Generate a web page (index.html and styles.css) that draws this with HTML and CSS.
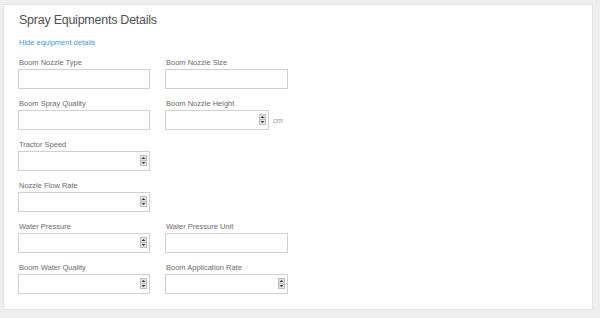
FILE: index.html
```html
<!DOCTYPE html>
<html lang="en">
<head>
  <meta charset="UTF-8" />
  <meta name="viewport" content="width=device-width, initial-scale=1.0" />
  <title>Spray Equipments Details</title>
  <link rel="stylesheet" href="styles.css">
</head>
<body>
  <div class="panel">
    <h2>Spray Equipments Details</h2>
    <a class="toggle" href="#">Hide equipment details</a>

    <div class="fields">
      <div class="field">
        <label for="nozzleType">Boom Nozzle Type</label>
        <input type="text" id="nozzleType">
      </div>
      <div class="field field-narrow">
        <label for="nozzleSize">Boom Nozzle Size</label>
        <input type="text" id="nozzleSize">
      </div>

      <div class="field">
        <label for="sprayQuality">Boom Spray Quality</label>
        <input type="text" id="sprayQuality">
      </div>
      <div class="field field-narrow">
        <label for="nozzleHeight">Boom Nozzle Height</label>
        <div class="with-unit">
          <div class="number short">
            <input type="text" id="nozzleHeight">
            <svg class="spin" width="7" height="11" viewBox="0 0 7 11"><rect x="0.5" y="0.5" width="6" height="10" fill="#e6e6e6" stroke="#bdbdbd"/><line x1="1" y1="5.5" x2="6" y2="5.5" stroke="#bdbdbd"/><path d="M3.5 2 L5.5 4 L1.5 4 Z" fill="#333"/><path d="M1.5 7 L5.5 7 L3.5 9 Z" fill="#333"/></svg>
          </div>
          <span class="unit">cm</span>
        </div>
      </div>

      <div class="field">
        <label for="tractorSpeed">Tractor Speed</label>
        <div class="number">
          <input type="text" id="tractorSpeed">
          <svg class="spin" width="7" height="11" viewBox="0 0 7 11"><rect x="0.5" y="0.5" width="6" height="10" fill="#e6e6e6" stroke="#bdbdbd"/><line x1="1" y1="5.5" x2="6" y2="5.5" stroke="#bdbdbd"/><path d="M3.5 2 L5.5 4 L1.5 4 Z" fill="#333"/><path d="M1.5 7 L5.5 7 L3.5 9 Z" fill="#333"/></svg>
        </div>
      </div>
      <div></div>

      <div class="field">
        <label for="flowRate">Nozzle Flow Rate</label>
        <div class="number">
          <input type="text" id="flowRate">
          <svg class="spin" width="7" height="11" viewBox="0 0 7 11"><rect x="0.5" y="0.5" width="6" height="10" fill="#e6e6e6" stroke="#bdbdbd"/><line x1="1" y1="5.5" x2="6" y2="5.5" stroke="#bdbdbd"/><path d="M3.5 2 L5.5 4 L1.5 4 Z" fill="#333"/><path d="M1.5 7 L5.5 7 L3.5 9 Z" fill="#333"/></svg>
        </div>
      </div>
      <div></div>

      <div class="field">
        <label for="waterPressure">Water Pressure</label>
        <div class="number">
          <input type="text" id="waterPressure">
          <svg class="spin" width="7" height="11" viewBox="0 0 7 11"><rect x="0.5" y="0.5" width="6" height="10" fill="#e6e6e6" stroke="#bdbdbd"/><line x1="1" y1="5.5" x2="6" y2="5.5" stroke="#bdbdbd"/><path d="M3.5 2 L5.5 4 L1.5 4 Z" fill="#333"/><path d="M1.5 7 L5.5 7 L3.5 9 Z" fill="#333"/></svg>
        </div>
      </div>
      <div class="field field-narrow">
        <label for="pressureUnit">Water Pressure Unit</label>
        <input type="text" id="pressureUnit">
      </div>

      <div class="field">
        <label for="waterQuality">Boom Water Quality</label>
        <div class="number">
          <input type="text" id="waterQuality">
          <svg class="spin" width="7" height="11" viewBox="0 0 7 11"><rect x="0.5" y="0.5" width="6" height="10" fill="#e6e6e6" stroke="#bdbdbd"/><line x1="1" y1="5.5" x2="6" y2="5.5" stroke="#bdbdbd"/><path d="M3.5 2 L5.5 4 L1.5 4 Z" fill="#333"/><path d="M1.5 7 L5.5 7 L3.5 9 Z" fill="#333"/></svg>
        </div>
      </div>
      <div class="field field-narrow">
        <label for="applicationRate">Boom Application Rate</label>
        <div class="number">
          <input type="text" id="applicationRate">
          <svg class="spin" width="7" height="11" viewBox="0 0 7 11"><rect x="0.5" y="0.5" width="6" height="10" fill="#e6e6e6" stroke="#bdbdbd"/><line x1="1" y1="5.5" x2="6" y2="5.5" stroke="#bdbdbd"/><path d="M3.5 2 L5.5 4 L1.5 4 Z" fill="#333"/><path d="M1.5 7 L5.5 7 L3.5 9 Z" fill="#333"/></svg>
        </div>
      </div>
    </div>
  </div>
</body>
</html>
```

FILE: styles.css
```css
body {
  margin: 0;
  padding: 4px 7px 8px 3px;
  background-color: #efefef;
  font-family: 'Liberation Sans', Arial, sans-serif;
  color: #666;
}

.panel {
  background-color: #fff;
  border: 1px solid #e2e2e2;
  padding: 8px 14px 15px 14px;
}

h2 {
  margin: 0 0 10px 1px;
  font-size: 12.5px;
  line-height: 15px;
  font-weight: normal;
  letter-spacing: -0.25px;
  color: #505050;
}

.toggle {
  display: block;
  margin: 0 0 11px 1px;
  font-size: 7.5px;
  line-height: 9px;
  color: #3d9ad8;
  text-decoration: none;
}

.fields {
  display: grid;
  grid-template-columns: 132px 123px;
  column-gap: 15px;
  row-gap: 10px;
}

label {
  display: block;
  margin: 0 0 2px 1px;
  font-size: 7.5px;
  line-height: 9px;
  color: #6a6a6a;
}

input {
  display: block;
  box-sizing: border-box;
  width: 100%;
  height: 20px;
  margin: 0;
  padding: 0 4px;
  border: 1px solid #d0d0d0;
  border-radius: 0;
  background-color: #fff;
  font-family: inherit;
  font-size: 8px;
}

.number {
  position: relative;
}

.number .spin {
  position: absolute;
  right: 3px;
  top: 4px;
}

.with-unit {
  display: flex;
  align-items: center;
  gap: 4px;
}

.number.short {
  width: 104px;
}

.unit {
  font-size: 7.5px;
  color: #999999;
}
```
